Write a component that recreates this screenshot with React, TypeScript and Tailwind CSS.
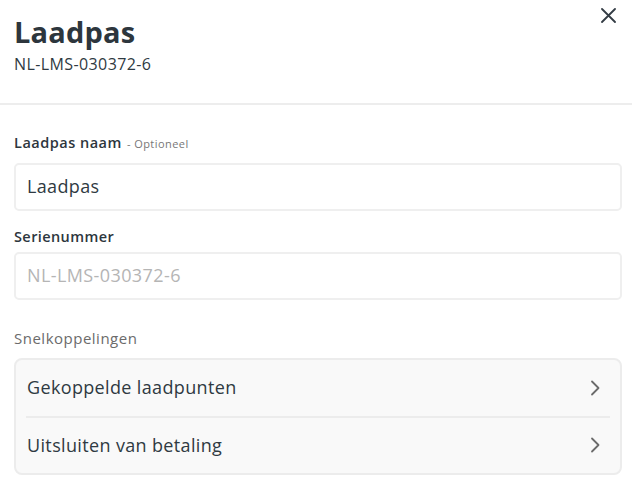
import React from "react";

function Chevron() {
  return (
    <svg width="10" height="16" viewBox="0 0 10 16" fill="none" className="shrink-0">
      <path d="M2 1.5 L8.5 8 L2 14.5" stroke="#6b6b6b" strokeWidth="1.8" strokeLinecap="round" strokeLinejoin="round" />
    </svg>
  );
}

export default function App() {
  return (
    <div className="w-[632px] h-[492px] bg-white text-[#2f3a42] overflow-hidden" style={{ fontFamily: "'Open Sans', 'Noto Sans', sans-serif" }}>
      <div className="relative pl-[14px] pr-[10px] pt-[12px] h-[103px]">
        <h1 className="text-[29px] font-bold leading-[40px] tracking-[0.2px] text-[#2d363d]">Laadpas</h1>
        <div className="text-[16px] leading-[22px] mt-[1px] tracking-[0.4px] text-[#2f3a42]">NL-LMS-030372-6</div>
        <button className="absolute right-[16px] top-[8px] w-[15px] h-[15px]">
          <svg width="15" height="15" viewBox="0 0 15 15" fill="none">
            <path d="M1 1 L14 14 M14 1 L1 14" stroke="#333c44" strokeWidth="1.8" strokeLinecap="round" />
          </svg>
        </button>
      </div>
      <div className="h-[2px] bg-[#ededed]" />
      <div className="pl-[14px] pr-[10px] pt-[29px]">
        <div className="flex items-baseline gap-[5px]">
          <span className="text-[14.5px] font-semibold leading-[18px] tracking-[0.5px] text-[#2d363d]">Laadpas naam</span>
          <span className="text-[11px] tracking-[0.45px] text-[#777]">- Optioneel</span>
        </div>
        <div className="mt-[10px] h-[48px] rounded-[5px] border-2 border-[#efefef] flex items-center px-[11px] text-[18px] tracking-[0.35px] text-[#2f3a42]">
          Laadpas
        </div>
        <div className="mt-[16px] text-[14.5px] font-semibold leading-[20px] tracking-[0.4px] text-[#2d363d]">Serienummer</div>
        <div className="mt-[5px] h-[48px] rounded-[5px] border-2 border-[#efefef] flex items-center px-[11px] text-[18px] tracking-[0.4px] text-[#b5b5b5]">
          NL-LMS-030372-6
        </div>
        <div className="mt-[28px] text-[15px] leading-[20px] tracking-[0.5px] text-[#6b6b6b]">Snelkoppelingen</div>
        <div className="mt-[10px] rounded-[8px] border-2 border-[#ececec] bg-[#f9f9f9]">
          <div className="flex items-center justify-between h-[56px] pl-[11px] pr-[20px] text-[18px] tracking-[0.35px] text-[#2f3a42]">
            <span>Gekoppelde laadpunten</span>
            <Chevron />
          </div>
          <div className="mx-[10px] h-[2px] bg-[#ececec]" />
          <div className="flex items-center justify-between h-[55px] pl-[11px] pr-[20px] text-[18px] tracking-[0.35px] text-[#2f3a42]">
            <span>Uitsluiten van betaling</span>
            <Chevron />
          </div>
        </div>
      </div>
    </div>
  );
}
